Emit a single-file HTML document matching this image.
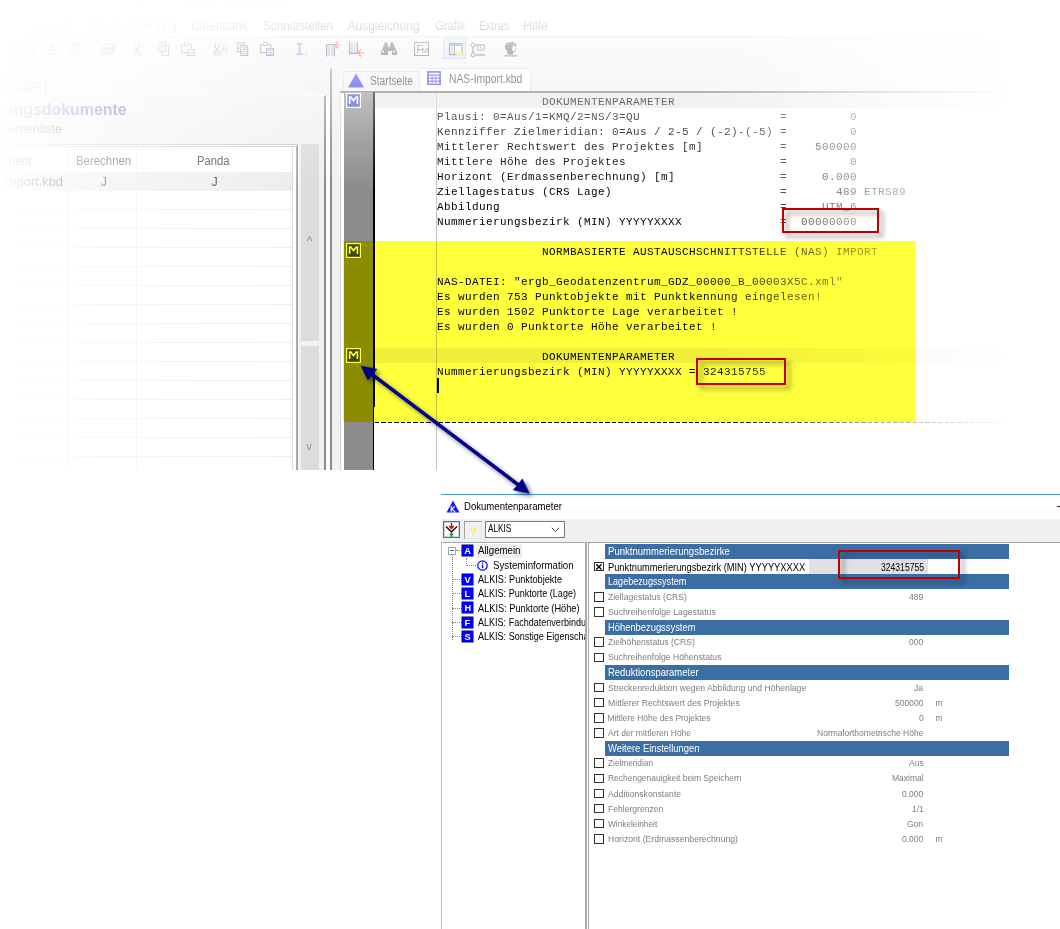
<!DOCTYPE html>
<html lang="de">
<head>
<meta charset="utf-8">
<title>Dokumentenparameter</title>
<style>
*{box-sizing:border-box;margin:0;padding:0}
html,body{width:1060px;height:929px;background:#fff;overflow:hidden}
body{position:relative;font-family:"Liberation Sans",sans-serif;font-size:12px;color:#000}
.abs,.abs *{position:absolute}
.abs{left:0;top:0}
.t{white-space:pre;line-height:1}
#top{width:1060px;height:470px;overflow:hidden;background:#fff}
.mono{font-family:"Liberation Mono",monospace;font-size:12px;line-height:15px;white-space:pre;color:#000}
.fade{left:0;top:0;width:1060px;height:470px;pointer-events:none}
.rbox{border:2px solid #c00000;filter:drop-shadow(4px 4px 2.5px rgba(0,0,0,.45))}
.band{left:605.4px;width:403.4px;height:14.6px;background:#3a6ea5}
.cb{width:9.5px;height:9.5px;border:1px solid #333;background:#fff}
.ti{width:11px;height:11px;background:#0000ff;box-shadow:0 0 0 0.5px #000060}
.hl{width:10px;height:0;border-top:1px dotted #808080}
</style>
</head>
<body>
<!-- TOP SCREENSHOT -->
<div id="top" class="abs">
<div class="t" style="left:8.0px;top:-3.2px;font-size:12px;color:#aaa;transform:scaleX(0.774);transform-origin:0 0;">Vermessung-Berechnung - Panda</div>
<div class="t" style="left:177.0px;top:-3.2px;font-size:12px;color:#aaa;transform:scaleX(1.027);transform-origin:0 0;">Projekt: NAS-Projekt</div>
<div class="t" style="left:3.0px;top:20.3px;font-size:12px;color:#1a1a1a;transform:scaleX(0.959);transform-origin:0 0;">ent</div>
<div class="t" style="left:35.0px;top:20.3px;font-size:12px;color:#1a1a1a;transform:scaleX(0.981);transform-origin:0 0;">Ansicht</div>
<div class="t" style="left:88.7px;top:20.3px;font-size:12px;color:#1a1a1a;transform:scaleX(0.967);transform-origin:0 0;">Messauswertung</div>
<div class="t" style="left:191.3px;top:20.3px;font-size:12px;color:#1a1a1a;transform:scaleX(0.977);transform-origin:0 0;">Datenbank</div>
<div class="t" style="left:262.5px;top:20.3px;font-size:12px;color:#1a1a1a;transform:scaleX(0.981);transform-origin:0 0;">Schnittstellen</div>
<div class="t" style="left:347.5px;top:20.3px;font-size:12px;color:#1a1a1a;">Ausgleichung</div>
<div class="t" style="left:434.5px;top:20.3px;font-size:12px;color:#1a1a1a;transform:scaleX(0.943);transform-origin:0 0;">Grafik</div>
<div class="t" style="left:479.2px;top:20.3px;font-size:12px;color:#1a1a1a;transform:scaleX(0.882);transform-origin:0 0;">Extras</div>
<div class="t" style="left:523.2px;top:20.3px;font-size:12px;color:#1a1a1a;transform:scaleX(1.041);transform-origin:0 0;">Hilfe</div>
<div style="left:0px;top:36px;width:1060px;height:32px;background:#f0f0f0;border-top:1px solid #c8c8c8;"></div>
<svg style="left:23px;top:42px" width="14" height="14" viewBox="0 0 14 14"><path d="M2 1h9v5H2zM1 7h12l-2 6H0z" fill="none" stroke="#404040" stroke-width="1.3"/><path d="M4 3h5M3 9h7M3 11h6" stroke="#404040"/></svg>
<svg style="left:46px;top:42px" width="13" height="14" viewBox="0 0 13 14"><path d="M6 0l3 4-3 2 4 3H2zM1 11h11v2H1z" fill="#404040"/></svg>
<svg style="left:67px;top:42px" width="16" height="14" viewBox="0 0 16 14"><path d="M8 0v3M2 3h12M5 2h6v4H5zM8 6L3 12M8 6l5 6M8 6v6" stroke="#404040" stroke-width="1.4" fill="none"/><path d="M1 13h14" stroke="#20a020" stroke-width="1.5" stroke-dasharray="1 1"/></svg>
<svg style="left:100px;top:43px" width="16" height="13" viewBox="0 0 16 13"><path d="M5 1h9l-3 4H2zM1 6h12v5H1zM13 6l2-3v5l-2 3" fill="none" stroke="#404040" stroke-width="1.2"/><path d="M2 8h10M2 10h10" stroke="#404040"/></svg>
<svg style="left:133px;top:42px" width="15" height="14" viewBox="0 0 15 14"><path d="M2 0v5M6 0v5" stroke="#ff1818" stroke-width="1.2"/><path d="M2 5l4 5M6 5l-4 5" stroke="#404040" stroke-width="1.1"/><ellipse cx="1.8" cy="11.5" rx="1.3" ry="1.8" fill="none" stroke="#5a6ad8"/><ellipse cx="6.2" cy="11.5" rx="1.3" ry="1.8" fill="none" stroke="#5a6ad8"/><path d="M8 5.5h6" stroke="#5a6ad8" stroke-width="1.2" stroke-dasharray="1.5 1"/></svg>
<svg style="left:158px;top:42px" width="12" height="14" viewBox="0 0 12 14"><path d="M0.6 0.6h7v9h-7zM3.6 3.6h7v9.8h-7z" fill="#fff" stroke="#404040" stroke-width="1.2"/><path d="M2 5h2M6 8h3" stroke="#5a6ad8"/></svg>
<svg style="left:181px;top:42px" width="14" height="14" viewBox="0 0 14 14"><path d="M0.6 2.6h10v8h-10z" fill="#fff" stroke="#404040" stroke-width="1.2"/><path d="M3.5 0.6h4v3h-4z" fill="#fff" stroke="#404040"/><path d="M6.6 7.6h6.8v5.8H6.6z" fill="#fff" stroke="#404040" stroke-width="1.2"/><path d="M7 10.5h6" stroke="#404040"/></svg>
<svg style="left:213px;top:42px" width="15" height="14" viewBox="0 0 15 14"><path d="M2 0v5M6 0v5" stroke="#ff1818" stroke-width="1.2"/><path d="M2 5l4 5M6 5l-4 5" stroke="#404040" stroke-width="1.1"/><ellipse cx="1.8" cy="11.5" rx="1.3" ry="1.8" fill="none" stroke="#5a6ad8"/><ellipse cx="6.2" cy="11.5" rx="1.3" ry="1.8" fill="none" stroke="#5a6ad8"/><path d="M8.5 4.5h2.2M11.8 4.5h2.2M8.5 6.7h2.2M11.8 6.7h2.2M8.5 8.9h2.2M11.8 8.9h2.2" stroke="#5a6ad8" stroke-width="1.1"/></svg>
<svg style="left:236.5px;top:42px" width="12" height="14" viewBox="0 0 12 14"><path d="M0.6 0.6h7v9h-7zM3.6 3.6h7v9.8h-7z" fill="#fff" stroke="#404040" stroke-width="1.2"/><path d="M1.5 2.5h5M1.5 4.5h2M1.5 6.5h2M5 5.5h5M5 7.5h5M5 9.5h5M5 11.5h5" stroke="#5a6ad8"/></svg>
<svg style="left:260px;top:42px" width="14" height="14" viewBox="0 0 14 14"><path d="M0.6 2.6h10v8h-10z" fill="#fff" stroke="#404040" stroke-width="1.2"/><path d="M3.5 0.6h4v3h-4z" fill="#fff" stroke="#404040"/><path d="M6.6 6.6h6.8v6.8H6.6z" fill="#fff" stroke="#404040" stroke-width="1.2"/><path d="M7.5 8.5h5M7.5 10.5h5M7.5 12.3h5M10 7v6" stroke="#5a6ad8"/></svg>
<svg style="left:296px;top:43px" width="12" height="13" viewBox="0 0 12 13"><path d="M0.5 0.8h6M0.5 11.2h6M3.5 1v10" stroke="#5a6ad8" stroke-width="1.6" fill="none"/><rect x="9.5" y="10.5" width="1" height="2" fill="#20a020"/></svg>
<svg style="left:325px;top:40px" width="17" height="17" viewBox="0 0 17 17"><path d="M1.6 4.6h7.8v11.8" fill="none" stroke="#404040" stroke-width="1.2"/><path d="M1.6 4.6v11.8" stroke="#404040" stroke-width="1.2"/><path d="M3 7h5M3 9h5M3 11h5M3 13h5M3 15h5" stroke="#5a6ad8" stroke-width="1" stroke-dasharray="2 1"/><path d="M16 5h-6M13 1.5L10 5l3 3.5" fill="none" stroke="#ff1818" stroke-width="1.2"/></svg>
<svg style="left:348px;top:41px" width="17" height="17" viewBox="0 0 17 17"><path d="M1.6 1v11.4h7.8V1" fill="none" stroke="#404040" stroke-width="1.2"/><path d="M3 3h5M3 5h5M3 7h5M3 9h5M3 11h5" stroke="#5a6ad8" stroke-width="1" stroke-dasharray="2 1"/><path d="M16 12h-6M13 8.5L10 12l3 3.5" fill="none" stroke="#ff1818" stroke-width="1.2"/></svg>
<svg style="left:380.5px;top:41.5px" width="16" height="14" viewBox="0 0 16 14"><path d="M3 3l1-3h2l1 3v2h2V3l1-3h2l1 3 3 7v3h-5V9H7v4H0v-3z" fill="#404040"/><path d="M2 8v3M13 8v3" stroke="#fff" stroke-width="1.2"/></svg>
<div style="left:414px;top:42px;width:15px;height:14px;border:1.6px solid #404040;"></div>
<div class="t" style="left:416.4px;top:44.3px;font-size:11px;color:#404040;">F</div>
<div class="t" style="left:421.6px;top:46.8px;font-size:8px;color:#404040;">M</div>
<div style="left:443px;top:38px;width:23px;height:21px;background:#cfe0fa;border:1px solid #9cc0f0;"></div>
<svg style="left:449px;top:43px" width="14" height="13" viewBox="0 0 14 13"><rect x="0.6" y="0.6" width="12.4" height="11" fill="#f4f4f4" stroke="#404040" stroke-width="1.2"/><rect x="1" y="1" width="11.5" height="2" fill="#5a6ad8"/><path d="M3 4.5v6" stroke="#404040" stroke-width="1.2" stroke-dasharray="1 1"/><rect x="4.8" y="1.4" width="1" height="10" fill="#404040"/><path d="M7 7.5h2l1 1h3.5v4H7z" fill="#f0e040"/></svg>
<svg style="left:470px;top:42px" width="16" height="16" viewBox="0 0 16 16"><path d="M3 5v6M3 3.2h12M3 12.8h12" stroke="#404040" stroke-width="1.2"/><circle cx="3" cy="3" r="2" fill="#fff" stroke="#404040"/><circle cx="3" cy="13" r="2" fill="#fff" stroke="#404040"/><rect x="7.5" y="3.5" width="7" height="4.5" fill="#eef" stroke="#5a6ad8"/><path d="M10 5l2 1.5" stroke="#5a6ad8" stroke-width="1.3"/></svg>
<svg style="left:504px;top:42px" width="14" height="15" viewBox="0 0 14 15"><path d="M7 0c4 0 5.5 2 5.5 4l-1 1 .7 2.5-1.2.5v2l-2 .5v2H3.5V9C1.5 8 0.5 6 1 4 1.5 1.5 4 0 7 0z" fill="#404040"/><path d="M9 3.5l2.5 1-.5 3.5-1.5 1.5-1.5-2z" fill="#fff"/><path d="M0.5 13.8h13" stroke="#5a6ad8" stroke-width="1.6"/></svg>
<div style="left:0px;top:68px;width:332px;height:402px;background:#f0f0f0;border-right:2px solid #8a8a8a;border-top:1px solid #fafafa;"></div>
<div style="left:326px;top:96px;width:4px;height:374px;background:#fbfbfb;"></div>
<div style="left:0px;top:95px;width:326px;height:375px;border-right:2px solid #8a8a8a;border-top:1px solid #fcfcfc;"></div>
<div class="t" style="left:17.8px;top:81.1px;font-size:12.5px;color:#222;transform:scaleX(0.785);transform-origin:0 0;">MDP</div>
<div style="left:45px;top:77px;width:1px;height:18px;background:#555;"></div>
<div style="left:5px;top:78px;width:3px;height:16px;background:#888;"></div>
<div class="t" style="left:-60.3px;top:101.0px;font-size:16.5px;color:#2238b0;font-weight:700;transform:scaleX(0.965);transform-origin:0 0;">Berechnungsdokumente</div>
<div class="t" style="left:-31.1px;top:123.4px;font-size:12px;color:#333;transform:scaleX(1.041);transform-origin:0 0;">Dokumentenliste</div>
<div style="left:0px;top:144px;width:298px;height:326px;background:#fff;border-top:3px double #c0c0c0;border-right:2px solid #a2a2a2;"></div>
<div style="left:0px;top:172px;width:292px;height:19px;background:#ebebeb;"></div>
<div style="left:0px;top:191px;width:292px;height:279px;background:repeating-linear-gradient(to bottom,transparent 0,transparent 18.03px,#ececec 18.03px,#ececec 19.03px);"></div>
<div style="left:68px;top:148px;width:1px;height:322px;background:#eaeaea;"></div>
<div style="left:136px;top:148px;width:1px;height:322px;background:#eaeaea;"></div>
<div style="left:292px;top:148px;width:1px;height:322px;background:#d8d8d8;"></div>
<div class="t" style="left:-22.0px;top:154.9px;font-size:12.5px;color:#202020;transform:scaleX(0.940);transform-origin:0 0;">Dokument</div>
<div class="t" style="left:75.6px;top:154.9px;font-size:12.5px;color:#202020;transform:scaleX(0.913);transform-origin:0 0;">Berechnen</div>
<div class="t" style="left:197.2px;top:154.9px;font-size:12.5px;color:#202020;transform:scaleX(0.902);transform-origin:0 0;">Panda</div>
<div class="t" style="left:-28.1px;top:176.4px;font-size:12.5px;color:#202020;transform:scaleX(1.022);transform-origin:0 0;">NAS-Import.kbd</div>
<div class="t" style="left:100.8px;top:176.4px;font-size:12.5px;color:#202020;">J</div>
<div class="t" style="left:211.6px;top:176.4px;font-size:12.5px;color:#202020;">J</div>
<div style="left:301px;top:144px;width:18px;height:197px;background:#dadada;"></div>
<div style="left:301px;top:346px;width:18px;height:124px;background:#dadada;"></div>
<div class="t" style="left:306.8px;top:235.0px;font-size:12px;color:#8a8a8a;">^</div>
<div class="t" style="left:306.5px;top:441.1px;font-size:10.5px;color:#8a8a8a;">v</div>
<div style="left:332px;top:68px;width:728px;height:402px;background:#f0f0f0;"></div>
<div style="left:343px;top:70.5px;width:77px;height:21.5px;background:#f0f0f0;border:1px solid #d4d4d4;border-bottom:none;"></div>
<div style="left:419px;top:68px;width:112px;height:24px;background:#fff;border:1px solid #d4d4d4;border-bottom:none;"></div>
<svg style="left:347px;top:71.5px" width="18" height="17" viewBox="0 0 18 17"><polygon points="9,1.5 17,15.6 1,15.6" fill="#2424f0"/></svg>
<div class="t" style="left:370.0px;top:75.4px;font-size:12px;color:#1a1a1a;transform:scaleX(0.848);transform-origin:0 0;">Startseite</div>
<svg style="left:427px;top:71px" width="14" height="14" viewBox="0 0 15 15"><rect x="0" y="0" width="15" height="15" fill="#3030e8"/><g fill="#fff"><rect x="2" y="2" width="11" height="1.6"/><rect x="2" y="5" width="3" height="2"/><rect x="6" y="5" width="3" height="2"/><rect x="10" y="5" width="3" height="2"/><rect x="2" y="8.3" width="3" height="2"/><rect x="6" y="8.3" width="3" height="2"/><rect x="10" y="8.3" width="3" height="2"/><rect x="2" y="11.6" width="3" height="2"/><rect x="6" y="11.6" width="3" height="2"/><rect x="10" y="11.6" width="3" height="2"/></g></svg>
<div class="t" style="left:448.8px;top:73.4px;font-size:12px;color:#1a1a1a;transform:scaleX(0.859);transform-origin:0 0;">NAS-Import.kbd</div>
<div style="left:340px;top:91px;width:720px;height:379px;background:#fff;border-top:2px solid #707070;border-left:1px solid #d4d4d4;"></div>
<div style="left:373px;top:93px;width:687px;height:15px;background:#e8e8e8;"></div>
<div style="left:373px;top:348px;width:687px;height:15px;background:#efefef;"></div>
<div style="left:344px;top:92px;width:29px;height:378px;background:#8c8c8c;"></div>
<div style="left:344px;top:241px;width:29px;height:181px;background:#8c8c00;"></div>
<div style="left:373px;top:92px;width:1px;height:378px;background:#000;"></div>
<div style="left:374px;top:92px;width:1px;height:315px;background:#000;"></div>
<div style="left:436px;top:93px;width:1px;height:377px;background:#c4c4c4;"></div>
<div style="left:375px;top:422px;width:685px;height:1px;background:repeating-linear-gradient(to right,#000 0,#000 4.4px,transparent 4.4px,transparent 6.4px);"></div>
<pre class="mono" style="left:437px;top:95px;font-size:11px;letter-spacing:0.4px">               DOKUMENTENPARAMETER
Plausi: 0=Aus/1=KMQ/2=NS/3=QU                    =         0
Kennziffer Zielmeridian: 0=Aus / 2-5 / (-2)-(-5) =         0
Mittlerer Rechtswert des Projektes [m]           =    500000
Mittlere Höhe des Projektes                      =         0
Horizont (Erdmassenberechnung) [m]               =     0.000
Ziellagestatus (CRS Lage)                        =       489 ETRS89
Abbildung                                        =     UTM_6
Nummerierungsbezirk (MIN) YYYYYXXXX              =  00000000

               NORMBASIERTE AUSTAUSCHSCHNITTSTELLE (NAS) IMPORT

NAS-DATEI: "ergb_Geodatenzentrum_GDZ_00000_B_00003X5C.xml"
Es wurden 753 Punktobjekte mit Punktkennung eingelesen!
Es wurden 1502 Punktorte Lage verarbeitet !
Es wurden 0 Punktorte Höhe verarbeitet !

               DOKUMENTENPARAMETER
Nummerierungsbezirk (MIN) YYYYYXXXX = 324315755</pre>
<div style="left:437px;top:378px;width:2px;height:15px;background:#000;"></div>
<svg style="left:346px;top:93px" width="15" height="15" viewBox="0 0 15 15"><rect x="0.6" y="0.6" width="13.8" height="13.8" fill="#3848d0" stroke="#fff" stroke-width="1.2"/><path d="M3.6 11V4h1.2l2.7 3.6L10.2 4h1.2v7" fill="none" stroke="#fff" stroke-width="1.6"/></svg>
<svg style="left:346px;top:243px" width="15" height="15" viewBox="0 0 15 15"><rect x="0.6" y="0.6" width="13.8" height="13.8" fill="#3c4848" stroke="#fff" stroke-width="1.2"/><path d="M3.6 11V4h1.2l2.7 3.6L10.2 4h1.2v7" fill="none" stroke="#fff" stroke-width="1.6"/></svg>
<svg style="left:346px;top:348px" width="15" height="15" viewBox="0 0 15 15"><rect x="0.6" y="0.6" width="13.8" height="13.8" fill="#3c4848" stroke="#fff" stroke-width="1.2"/><path d="M3.6 11V4h1.2l2.7 3.6L10.2 4h1.2v7" fill="none" stroke="#fff" stroke-width="1.6"/></svg>
<div class="fade" style="background:linear-gradient(to bottom,rgba(255,255,255,1) 0,rgba(255,255,255,.87) 25px,rgba(255,255,255,.64) 50px,rgba(255,255,255,.45) 93px,rgba(255,255,255,.2) 140px,rgba(255,255,255,0) 190px)"></div>
<div class="fade" style="background:linear-gradient(to right,rgba(255,255,255,1) 0,rgba(255,255,255,.9) 20px,rgba(255,255,255,.6) 100px,rgba(255,255,255,.3) 215px,rgba(255,255,255,0) 330px)"></div>
<div class="fade" style="background:linear-gradient(to right,rgba(255,255,255,0) 690px,rgba(255,255,255,.14) 740px,rgba(255,255,255,.36) 800px,rgba(255,255,255,.56) 850px,rgba(255,255,255,.75) 916px,rgba(255,255,255,.88) 960px,rgba(255,255,255,1) 1015px)"></div>
<div class="fade" style="background:radial-gradient(ellipse 330px 120px at 0 0,rgba(255,255,255,.9) 0,rgba(255,255,255,.6) 50%,rgba(255,255,255,0) 100%)"></div>
</div>
<!-- DIALOG -->
<div id="dlg" class="abs">
<div style="left:441px;top:494px;width:619px;height:435px;background:#fff;border-top:1px solid #4a9be0;"></div>
<svg style="left:446px;top:500px" width="14" height="13" viewBox="0 0 14 13"><polygon points="7,0.5 13.5,12.5 0.5,12.5" fill="#1a1aff"/><path d="M5.2 6v6M5.4 9.5l3.2-3M6 9l3.4 3.3" stroke="#fff" stroke-width="1.1" fill="none"/></svg>
<div class="t" style="left:463.7px;top:502.4px;font-size:10.2px;color:#000;transform:scaleX(0.940);transform-origin:0 0;">Dokumentenparameter</div>
<div style="left:1057px;top:506px;width:3px;height:1px;background:#333;"></div>
<div style="left:441px;top:519px;width:619px;height:24px;background:#f0f0f0;"></div>
<div style="left:443px;top:521px;width:17px;height:17px;background:#fff;border:1px solid #5a6e88;box-shadow:inset 0 0 0 1px #c8d4e4;"></div>
<svg style="left:445px;top:523px" width="13" height="14" viewBox="0 0 13 14"><path d="M1 3.5L6.5 9 12 3.5" fill="none" stroke="#000" stroke-width="1.3"/><path d="M6.5 0v5M4.3 3l2.2 2.6L8.7 3" fill="none" stroke="#d01010" stroke-width="1.5"/><path d="M6.5 10v4M4.5 11.5h4" stroke="#10a020" stroke-width="1.6"/></svg>
<div style="left:464px;top:521px;width:18px;height:18px;background:#f0f0f0;border:1px solid #a0a0a0;border-right-color:#e4e4e4;border-bottom-color:#e4e4e4;"></div>
<div class="t" style="left:470.0px;top:526.7px;font-size:11px;color:#ffee00;">?</div>
<div style="left:485px;top:521px;width:80px;height:17px;background:#fff;border:1px solid #7a7a7a;"></div>
<div class="t" style="left:488.3px;top:524.4px;font-size:10.2px;color:#000;transform:scaleX(0.806);transform-origin:0 0;">ALKIS</div>
<svg style="left:551px;top:527px" width="9" height="6" viewBox="0 0 9 6"><path d="M0.8 0.8L4.5 4.6 8.2 0.8" fill="none" stroke="#444" stroke-width="1"/></svg>
<div style="left:441px;top:542px;width:145px;height:387px;background:#fff;border:1px solid #a8a8b0;border-left:1.5px solid #b8b8c0;border-bottom:none;"></div>
<div style="left:476px;top:544px;width:46px;height:13.5px;background:#eeeeee;"></div>
<div style="left:452px;top:555px;width:0;height:85px;border-left:1px dotted #808080"></div>
<div style="left:466px;top:558px;width:0;height:8px;border-left:1px dotted #808080"></div>
<div class="hl" style="left:466px;top:565px"></div>
<div class="hl" style="left:456px;top:550px;width:6px"></div>
<div class="hl" style="left:452px;top:579px"></div>
<div class="hl" style="left:452px;top:593px"></div>
<div class="hl" style="left:452px;top:608px"></div>
<div class="hl" style="left:452px;top:622px"></div>
<div class="hl" style="left:452px;top:636px"></div>
<div style="left:448px;top:547px;width:8px;height:8px;background:#fff;border:1px solid #9aa8c0;"></div>
<div style="left:450px;top:550px;width:4px;height:1px;background:#4060c0;"></div>
<div style="left:442px;top:543px;width:143px;height:386px;overflow:hidden"><div style="left:-442px;top:-543px;width:0;height:0"><div class="ti" style="left:462px;top:545.2px"></div>
<div class="t" style="left:464.2px;top:547.2px;font-size:9.3px;color:#fff;font-weight:700;">A</div>
<div class="t" style="left:478.0px;top:546.4px;font-size:10.2px;color:#000;transform:scaleX(0.950);transform-origin:0 0;">Allgemein</div>
<svg style="left:477px;top:559.5px" width="11" height="11" viewBox="0 0 11 11"><circle cx="5.5" cy="5.5" r="4.7" fill="#fff" stroke="#0000ff" stroke-width="1.2"/><rect x="4.9" y="4.6" width="1.3" height="3.6" fill="#0000ff"/><rect x="4.9" y="2.5" width="1.3" height="1.3" fill="#0000ff"/></svg>
<div class="t" style="left:492.7px;top:560.6px;font-size:10.2px;color:#000;transform:scaleX(0.956);transform-origin:0 0;">Systeminformation</div>
<div class="ti" style="left:462px;top:573.8px"></div>
<div class="t" style="left:464.6px;top:575.8px;font-size:9.3px;color:#fff;font-weight:700;">V</div>
<div class="t" style="left:478.0px;top:574.9px;font-size:10.2px;color:#000;transform:scaleX(0.899);transform-origin:0 0;">ALKIS: Punktobjekte</div>
<div class="ti" style="left:462px;top:588.0px"></div>
<div class="t" style="left:464.6px;top:590.1px;font-size:9.3px;color:#fff;font-weight:700;">L</div>
<div class="t" style="left:478.0px;top:589.2px;font-size:10.2px;color:#000;transform:scaleX(0.887);transform-origin:0 0;">ALKIS: Punktorte (Lage)</div>
<div class="ti" style="left:462px;top:602.3px"></div>
<div class="t" style="left:464.6px;top:604.3px;font-size:9.3px;color:#fff;font-weight:700;">H</div>
<div class="t" style="left:478.0px;top:603.5px;font-size:10.2px;color:#000;transform:scaleX(0.906);transform-origin:0 0;">ALKIS: Punktorte (Höhe)</div>
<div class="ti" style="left:462px;top:616.6px"></div>
<div class="t" style="left:464.6px;top:618.6px;font-size:9.3px;color:#fff;font-weight:700;">F</div>
<div class="t" style="left:478.0px;top:617.8px;font-size:10.2px;color:#000;transform:scaleX(0.887);transform-origin:0 0;">ALKIS: Fachdatenverbindungen</div>
<div class="ti" style="left:462px;top:630.9px"></div>
<div class="t" style="left:464.6px;top:632.9px;font-size:9.3px;color:#fff;font-weight:700;">S</div>
<div class="t" style="left:478.0px;top:632.0px;font-size:10.2px;color:#000;transform:scaleX(0.887);transform-origin:0 0;">ALKIS: Sonstige Eigenschaften</div></div></div>
<div style="left:586px;top:542px;width:474px;height:387px;background:#fff;border-left:3px double #a8a8a8;border-top:1px solid #a0a0a0;"></div>
<div class="band" style="top:544px"></div>
<div class="t" style="left:607.6px;top:547.2px;font-size:10.2px;color:#fff;transform:scaleX(0.939);transform-origin:0 0;">Punktnummerierungsbezirke</div>
<div class="cb" style="left:594px;top:561.7px"></div>
<div style="left:808.6px;top:559px;width:119.6px;height:15px;background:#e1e1e1;"></div>
<svg style="left:594px;top:561.7px" width="10" height="10" viewBox="0 0 10 10"><path d="M2.3 2.3l5.2 5.2M7.5 2.3L2.3 7.5" stroke="#000" stroke-width="1.3"/></svg>
<div class="t" style="left:607.6px;top:562.7px;font-size:10.2px;color:#000;transform:scaleX(0.912);transform-origin:0 0;">Punktnummerierungsbezirk (MIN) YYYYYXXXX</div>
<div class="t" style="left:880.5px;top:562.7px;font-size:10.2px;color:#000;transform:scaleX(0.843);transform-origin:0 0;">324315755</div>
<div class="band" style="top:574px"></div>
<div class="t" style="left:607.6px;top:577.4px;font-size:10.2px;color:#fff;transform:scaleX(0.892);transform-origin:0 0;">Lagebezugssystem</div>
<div class="cb" style="left:594px;top:592.0px"></div>
<div class="t" style="left:607.5px;top:592.8px;font-size:8.4px;color:#7d7d7d;transform:scaleX(1.020);transform-origin:0 0;">Ziellagestatus (CRS)</div>
<div class="t" style="left:909.2px;top:592.8px;font-size:8.4px;color:#7d7d7d;transform:scaleX(1.016);transform-origin:0 0;">489</div>
<div class="cb" style="left:594px;top:607.1px"></div>
<div class="t" style="left:607.5px;top:607.9px;font-size:8.4px;color:#7d7d7d;transform:scaleX(1.038);transform-origin:0 0;">Suchreihenfolge Lagestatus</div>
<div class="band" style="top:620px"></div>
<div class="t" style="left:607.6px;top:622.8px;font-size:10.2px;color:#fff;transform:scaleX(0.919);transform-origin:0 0;">Höhenbezugssystem</div>
<div class="cb" style="left:594px;top:637.4px"></div>
<div class="t" style="left:607.5px;top:638.2px;font-size:8.4px;color:#7d7d7d;transform:scaleX(1.025);transform-origin:0 0;">Zielhöhenstatus (CRS)</div>
<div class="t" style="left:909.2px;top:638.2px;font-size:8.4px;color:#7d7d7d;transform:scaleX(1.016);transform-origin:0 0;">000</div>
<div class="cb" style="left:594px;top:652.5px"></div>
<div class="t" style="left:607.5px;top:653.3px;font-size:8.4px;color:#7d7d7d;transform:scaleX(1.033);transform-origin:0 0;">Suchreihenfolge Höhenstatus</div>
<div class="band" style="top:665px"></div>
<div class="t" style="left:607.6px;top:668.2px;font-size:10.2px;color:#fff;transform:scaleX(0.930);transform-origin:0 0;">Reduktionsparameter</div>
<div class="cb" style="left:594px;top:682.8px"></div>
<div class="t" style="left:607.5px;top:683.6px;font-size:8.4px;color:#7d7d7d;transform:scaleX(1.028);transform-origin:0 0;">Streckenreduktion wegen Abbildung und Höhenlage</div>
<div class="t" style="left:914.4px;top:683.6px;font-size:8.4px;color:#7d7d7d;transform:scaleX(1.016);transform-origin:0 0;">Ja</div>
<div class="cb" style="left:594px;top:697.9px"></div>
<div class="t" style="left:607.5px;top:698.7px;font-size:8.4px;color:#7d7d7d;transform:scaleX(1.033);transform-origin:0 0;">Mittlerer Rechtswert des Projektes</div>
<div class="t" style="left:895.0px;top:698.7px;font-size:8.4px;color:#7d7d7d;transform:scaleX(1.016);transform-origin:0 0;">500000</div>
<div class="t" style="left:935.5px;top:698.7px;font-size:8.4px;color:#7d7d7d;">m</div>
<div class="cb" style="left:594px;top:713.0px"></div>
<div class="t" style="left:607.5px;top:713.8px;font-size:8.4px;color:#7d7d7d;">Mittlere Höhe des Projektes</div>
<div class="t" style="left:918.7px;top:713.8px;font-size:8.4px;color:#7d7d7d;transform:scaleX(1.016);transform-origin:0 0;">0</div>
<div class="t" style="left:935.5px;top:713.8px;font-size:8.4px;color:#7d7d7d;">m</div>
<div class="cb" style="left:594px;top:728.2px"></div>
<div class="t" style="left:607.5px;top:728.9px;font-size:8.4px;color:#7d7d7d;transform:scaleX(1.014);transform-origin:0 0;">Art der mittleren Höhe</div>
<div class="t" style="left:817.0px;top:728.9px;font-size:8.4px;color:#7d7d7d;transform:scaleX(1.016);transform-origin:0 0;">Normalorthometrische Höhe</div>
<div class="band" style="top:741px"></div>
<div class="t" style="left:607.6px;top:743.9px;font-size:10.2px;color:#fff;transform:scaleX(0.925);transform-origin:0 0;">Weitere Einstellungen</div>
<div class="cb" style="left:594px;top:758.4px"></div>
<div class="t" style="left:607.5px;top:759.2px;font-size:8.4px;color:#7d7d7d;transform:scaleX(0.986);transform-origin:0 0;">Zielmeridian</div>
<div class="t" style="left:908.7px;top:759.2px;font-size:8.4px;color:#7d7d7d;transform:scaleX(1.016);transform-origin:0 0;">Aus</div>
<div class="cb" style="left:594px;top:773.5px"></div>
<div class="t" style="left:607.5px;top:774.3px;font-size:8.4px;color:#7d7d7d;transform:scaleX(1.009);transform-origin:0 0;">Rechengenauigkeit beim Speichern</div>
<div class="t" style="left:891.7px;top:774.3px;font-size:8.4px;color:#7d7d7d;transform:scaleX(1.016);transform-origin:0 0;">Maximal</div>
<div class="cb" style="left:594px;top:788.7px"></div>
<div class="t" style="left:607.5px;top:789.5px;font-size:8.4px;color:#7d7d7d;transform:scaleX(1.033);transform-origin:0 0;">Additionskonstante</div>
<div class="t" style="left:902.1px;top:789.5px;font-size:8.4px;color:#7d7d7d;transform:scaleX(1.016);transform-origin:0 0;">0.000</div>
<div class="cb" style="left:594px;top:803.8px"></div>
<div class="t" style="left:607.5px;top:804.6px;font-size:8.4px;color:#7d7d7d;transform:scaleX(1.024);transform-origin:0 0;">Fehlergrenzen</div>
<div class="t" style="left:911.6px;top:804.6px;font-size:8.4px;color:#7d7d7d;transform:scaleX(1.016);transform-origin:0 0;">1/1</div>
<div class="cb" style="left:594px;top:818.9px"></div>
<div class="t" style="left:607.5px;top:819.7px;font-size:8.4px;color:#7d7d7d;transform:scaleX(0.988);transform-origin:0 0;">Winkeleinheit</div>
<div class="t" style="left:907.3px;top:819.7px;font-size:8.4px;color:#7d7d7d;transform:scaleX(1.016);transform-origin:0 0;">Gon</div>
<div class="cb" style="left:594px;top:834.1px"></div>
<div class="t" style="left:607.5px;top:834.9px;font-size:8.4px;color:#7d7d7d;transform:scaleX(1.034);transform-origin:0 0;">Horizont (Erdmassenberechnung)</div>
<div class="t" style="left:902.1px;top:834.9px;font-size:8.4px;color:#7d7d7d;transform:scaleX(1.016);transform-origin:0 0;">0.000</div>
<div class="t" style="left:935.5px;top:834.9px;font-size:8.4px;color:#7d7d7d;">m</div>
</div>
<!-- ANNOTATIONS -->
<div id="anno" class="abs">

<div style="left:343px;top:241px;width:573px;height:181px;background:#ffff3c;mix-blend-mode:multiply"></div>
<div class="rbox" style="left:782px;top:208px;width:97px;height:25px"></div>
<div class="rbox" style="left:696px;top:358px;width:90px;height:27px"></div>
<div class="rbox" style="left:838px;top:550px;width:122px;height:29px"></div>
<svg style="left:340px;top:350px;overflow:visible" width="220" height="170" viewBox="340 350 220 170">
<defs><filter id="sh" x="-20%" y="-20%" width="150%" height="150%"><feGaussianBlur in="SourceAlpha" stdDeviation="2"/><feOffset dx="3" dy="3" result="o"/><feComponentTransfer><feFuncA type="linear" slope="0.5"/></feComponentTransfer><feMerge><feMergeNode/><feMergeNode in="SourceGraphic"/></feMerge></filter></defs>
<g filter="url(#sh)" fill="#00008a" stroke="#00008a">
<line x1="371" y1="373.6" x2="519" y2="485.4" stroke-width="3.6"/>
<polygon points="361.1,366.1 376.9,369.2 367.9,380" stroke-width="0.6"/>
<polygon points="529.2,493.3 522.4,478.9 513.4,490" stroke-width="0.6"/>
</g>
</svg>

</div>
</body>
</html>
